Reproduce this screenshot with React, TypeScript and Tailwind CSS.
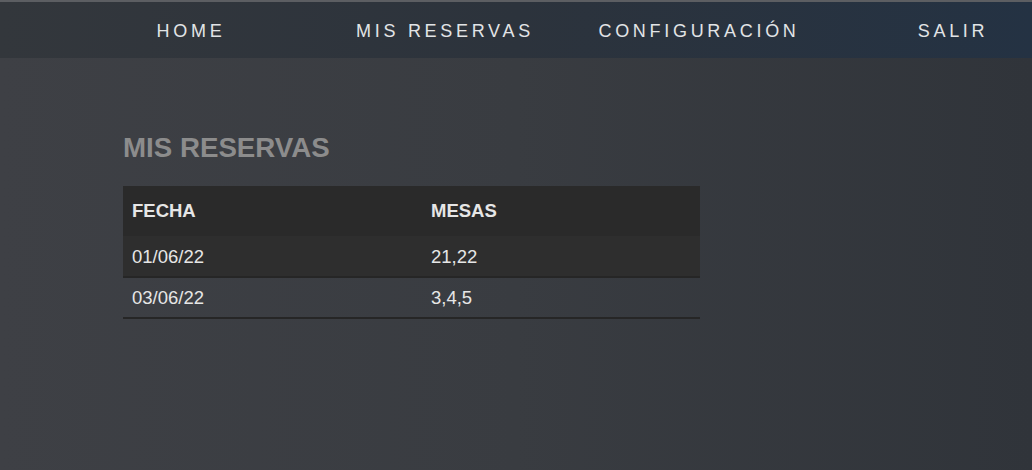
import React from "react";

const nav = ["HOME", "MIS RESERVAS", "CONFIGURACIÓN", "SALIR"];
const rows = [
  ["01/06/22", "21,22"],
  ["03/06/22", "3,4,5"],
];

export default function App() {
  return (
    <div
      className="w-[1032px] h-[470px] overflow-hidden flex flex-col bg-gradient-to-r from-[#3e4045] via-[#393c41] to-[#30343a]"
      style={{ fontFamily: '"Liberation Sans", Arial, sans-serif' }}
    >
      <nav className="h-[58px] shrink-0 border-t-2 border-[#5c5e62] bg-gradient-to-r from-[#33373c] via-[#2c333c] to-[#243243] overflow-hidden">
        <ul className="ml-[64px] w-[1016px] h-full grid grid-cols-4 items-center">
          {nav.map((n) => (
            <li
              key={n}
              className="text-center text-[18px] tracking-[3.7px] text-[#e2e4e6] pt-[2px]"
            >
              {n}
            </li>
          ))}
        </ul>
      </nav>
      <main className="pl-[123px] pt-[74px]">
        <h1 className="text-[27.7px] font-bold text-[#8c8c8c] leading-[32px]">
          MIS RESERVAS
        </h1>
        <table className="mt-[22px] w-[577px] border-collapse text-[18.5px] text-[#e6e6e6]">
          <thead>
            <tr className="bg-[#2a2a2a] h-[50px]">
              <th className="w-[299px] text-left pl-[9px] font-bold">FECHA</th>
              <th className="text-left pl-[9px] font-bold">MESAS</th>
            </tr>
          </thead>
          <tbody>
            {rows.map((r, i) => (
              <tr
                key={i}
                className={`h-[41px] border-b-2 border-[#262626] ${i === 0 ? "bg-[#2e2e2e]" : ""}`}
              >
                <td className="pl-[9px] pt-[1px]">{r[0]}</td>
                <td className="pl-[9px] pt-[1px]">{r[1]}</td>
              </tr>
            ))}
          </tbody>
        </table>
      </main>
    </div>
  );
}
